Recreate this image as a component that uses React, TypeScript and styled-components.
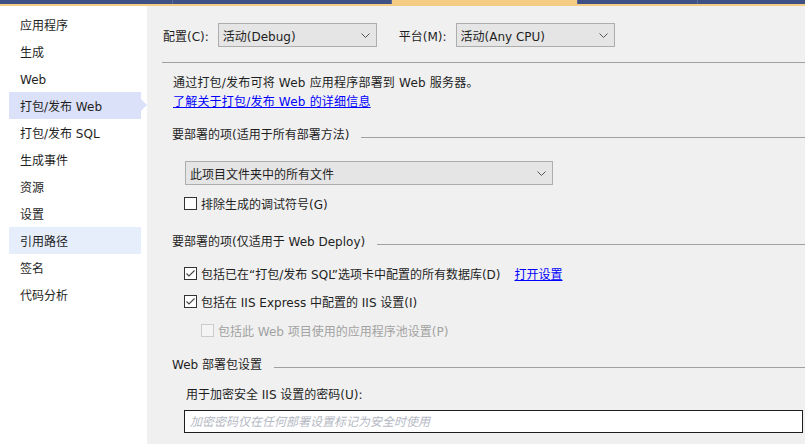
import styled, { createGlobalStyle } from "styled-components";

const uiFont = `"DejaVu Sans", "Noto Sans CJK SC", sans-serif`;

const GlobalStyle = createGlobalStyle`
  html, body {
    margin: 0;
    padding: 0;
    background: #f0f0f0;
  }
  body {
    font-family: ${uiFont};
    font-size: 12px;
    color: #1e1e1e;
  }
`;

const navItems = [
  "应用程序",
  "生成",
  "Web",
  "打包/发布 Web",
  "打包/发布 SQL",
  "生成事件",
  "资源",
  "设置",
  "引用路径",
  "签名",
  "代码分析",
];

const tabs = [
  { width: 172, active: false },
  { width: 218, active: false },
  { width: 185, active: true },
  { width: 119, active: false },
  { width: 111, active: false },
];

function Chevron() {
  return (
    <svg width="9" height="5" viewBox="0 0 9 5">
      <path d="M0.5 0.5 L4.5 4.5 L8.5 0.5" fill="none" stroke="#555" strokeWidth="1" />
    </svg>
  );
}

function Check({ checked, disabled }: { checked?: boolean; disabled?: boolean }) {
  return (
    <Box $disabled={disabled}>
      {checked ? (
        <svg width="11" height="11" viewBox="0 0 11 11">
          <path d="M1.5 5.5 L4 8 L9.5 2.5" fill="none" stroke="#444" strokeWidth="1.1" />
        </svg>
      ) : null}
    </Box>
  );
}

export default function App() {
  return (
    <>
      <GlobalStyle />
      <Page>
        <TabStrip>
          {tabs.map((t, i) => (
            <Tab key={i} $active={t.active} style={{ flexBasis: t.width }} />
          ))}
        </TabStrip>
        <Body>
          <Sidebar>
            {navItems.map((item) => (
              <NavItem
                key={item}
                $selected={item === "打包/发布 Web"}
                $hover={item === "引用路径"}
              >
                {item}
              </NavItem>
            ))}
          </Sidebar>
          <Content>
            <TopRow>
              <Label>配置(C):</Label>
              <Combo $width={159}>
                <span>活动(Debug)</span>
                <Chevron />
              </Combo>
              <Label $left={22}>平台(M):</Label>
              <Combo $width={159}>
                <span>活动(Any CPU)</span>
                <Chevron />
              </Combo>
            </TopRow>
            <Separator />
            <Description>
              <TextLine>通过打包/发布可将 Web 应用程序部署到 Web 服务器。</TextLine>
              <TextLine>
                <Link>了解关于打包/发布 Web 的详细信息</Link>
              </TextLine>
            </Description>

            <GroupHeading $top={14}>
              <span>要部署的项(适用于所有部署方法)</span>
              <Rule />
            </GroupHeading>
            <Combo $width={368} $indent={22} $top={16}>
              <span>此项目文件夹中的所有文件</span>
              <Chevron />
            </Combo>
            <CheckRow $top={9}>
              <Check />
              <span>排除生成的调试符号(G)</span>
            </CheckRow>

            <GroupHeading $top={20}>
              <span>要部署的项(仅适用于 Web Deploy)</span>
              <Rule />
            </GroupHeading>
            <CheckRow $top={12}>
              <Check checked />
              <span>包括已在“打包/发布 SQL”选项卡中配置的所有数据库(D)</span>
              <Link $left={10}>打开设置</Link>
            </CheckRow>
            <CheckRow $top={9}>
              <Check checked />
              <span>包括在 IIS Express 中配置的 IIS 设置(I)</span>
            </CheckRow>
            <CheckRow $top={10} $indent={38} $disabled>
              <Check disabled />
              <span>包括此 Web 项目使用的应用程序池设置(P)</span>
            </CheckRow>

            <GroupHeading $top={16}>
              <span>Web 部署包设置</span>
              <Rule />
            </GroupHeading>
            <FieldLabel>用于加密安全 IIS 设置的密码(U):</FieldLabel>
            <PasswordBox placeholder="加密密码仅在任何部署设置标记为安全时使用" />
          </Content>
        </Body>
      </Page>
    </>
  );
}

const Page = styled.div`
  width: 805px;
  height: 444px;
  overflow: hidden;
  display: flex;
  flex-direction: column;
`;

const TabStrip = styled.div`
  display: flex;
  gap: 1px;
  height: 4px;
  background: #5a6a96;
  border-bottom: 2px solid #f5cc84;
`;

const Tab = styled.div<{ $active: boolean }>`
  flex-grow: 0;
  flex-shrink: 0;
  background: ${(p) => (p.$active ? "#f5cc84" : "#3f5084")};
`;

const Body = styled.div`
  flex: 1;
  display: flex;
`;

const Sidebar = styled.div`
  width: 147px;
  flex-shrink: 0;
  background: #ffffff;
  padding: 5px 6px 0 9px;
  box-sizing: border-box;
  display: flex;
  flex-direction: column;
`;

const NavItem = styled.div<{ $selected?: boolean; $hover?: boolean }>`
  position: relative;
  height: 27px;
  box-sizing: border-box;
  padding: 3px 0 0 11px;
  line-height: 24px;
  color: #1e1e1e;
  white-space: nowrap;
  background: ${(p) => (p.$selected ? "#dbe1f8" : p.$hover ? "#e6edfb" : "transparent")};

  &::after {
    content: "";
    display: ${(p) => (p.$selected ? "block" : "none")};
    position: absolute;
    right: -6px;
    top: 7px;
    border-top: 6px solid transparent;
    border-bottom: 6px solid transparent;
    border-left: 6px solid #dbe1f8;
  }
`;

const Content = styled.div`
  flex: 1;
  display: flex;
  flex-direction: column;
  padding: 17px 0 0 16px;
  min-width: 0;
`;

const TopRow = styled.div`
  display: flex;
  align-items: center;
  height: 24px;
`;

const Label = styled.span<{ $left?: number }>`
  margin-left: ${(p) => p.$left ?? 0}px;
  margin-right: 9px;
  white-space: nowrap;
`;

const Combo = styled.div<{ $width: number; $indent?: number; $top?: number }>`
  width: ${(p) => p.$width}px;
  height: 24px;
  box-sizing: border-box;
  margin-left: ${(p) => p.$indent ?? 0}px;
  margin-top: ${(p) => p.$top ?? 0}px;
  flex-shrink: 0;
  display: flex;
  align-items: center;
  justify-content: space-between;
  padding: 0 6px 0 4px;
  background: #e5e5e5;
  border: 1px solid #adadad;
  white-space: nowrap;
`;

const Separator = styled.div`
  margin: 15px 0 0 -1px;
  height: 1px;
  background: #a0a0a0;
`;

const Description = styled.div`
  margin: 11px 0 0 10px;
  display: flex;
  flex-direction: column;
`;

const TextLine = styled.div`
  height: 19px;
  line-height: 19px;
  white-space: nowrap;
  letter-spacing: 0.2px;
`;

const Link = styled.span<{ $left?: number }>`
  margin-left: ${(p) => p.$left ?? 0}px;
  color: #0000ff;
  text-decoration: underline;
  cursor: pointer;
`;

const GroupHeading = styled.div<{ $top: number }>`
  margin: ${(p) => p.$top}px 0 0 9px;
  height: 19px;
  line-height: 19px;
  display: flex;
  align-items: center;
  gap: 12px;
  white-space: nowrap;
`;

const Rule = styled.div`
  flex: 1;
  height: 1px;
  margin-top: 3px;
  background: #a0a0a0;
`;

const CheckRow = styled.div<{ $top: number; $indent?: number; $disabled?: boolean }>`
  margin: ${(p) => p.$top}px 0 0 ${(p) => p.$indent ?? 21}px;
  height: 19px;
  display: flex;
  align-items: center;
  gap: 4px;
  white-space: nowrap;
  color: ${(p) => (p.$disabled ? "#a2a2a2" : "#1e1e1e")};
`;

const Box = styled.span<{ $disabled?: boolean }>`
  width: 13px;
  height: 13px;
  box-sizing: border-box;
  flex-shrink: 0;
  display: flex;
  align-items: center;
  justify-content: center;
  background: ${(p) => (p.$disabled ? "#f4f4f4" : "#ffffff")};
  border: 1px solid ${(p) => (p.$disabled ? "#cccccc" : "#333333")};
`;

const FieldLabel = styled.div`
  margin: 11px 0 0 23px;
  height: 19px;
  line-height: 19px;
  white-space: nowrap;
`;

const PasswordBox = styled.input`
  margin: 5px 2px 0 21px;
  height: 23px;
  box-sizing: border-box;
  border: 1px solid #1e1e1e;
  background: #ffffff;
  padding: 0 5px;
  font-family: ${uiFont};
  font-size: 12px;
  outline: none;

  &::placeholder {
    color: #b5b9c4;
    font-style: italic;
  }
`;
